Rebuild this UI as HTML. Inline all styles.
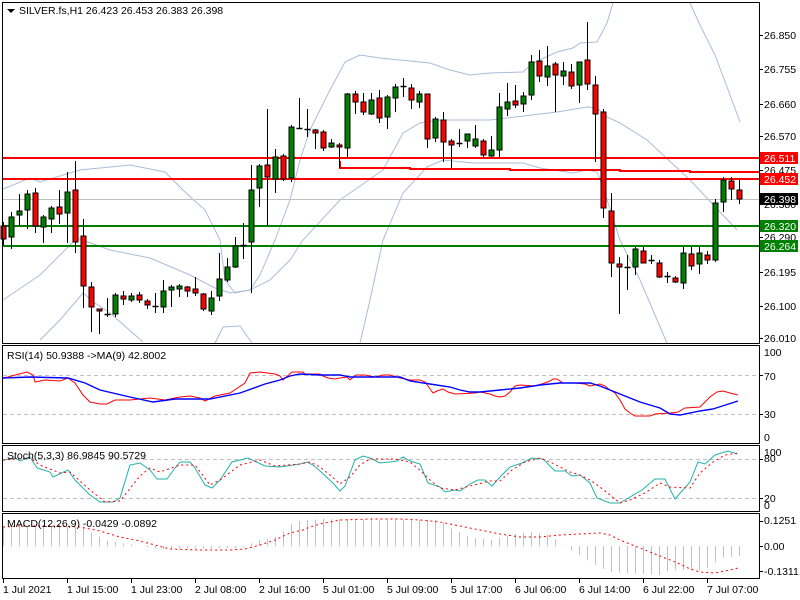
<!DOCTYPE html>
<html><head><meta charset="utf-8"><style>
html,body{margin:0;padding:0;background:#fff;}
svg{display:block;}
text{font-family:"Liberation Sans",sans-serif;font-size:10.5px;fill:#000;}
</style></head><body>
<svg id="s" width="800" height="600" viewBox="0 0 800 600" xmlns="http://www.w3.org/2000/svg">
<rect width="800" height="600" fill="#fff"/>
<g id="bands" fill="none" stroke="#A9BDDA" stroke-width="1"></g>
<g id="hl"></g>
<g id="cd"></g>
<g id="ind"></g>
<g fill="none" stroke="#000" stroke-width="1" shape-rendering="crispEdges">
<rect x="2.5" y="2.5" width="757" height="341"/>
<rect x="2.5" y="345.5" width="757" height="98"/>
<rect x="2.5" y="445.5" width="757" height="66"/>
<rect x="2.5" y="513.5" width="757" height="65"/>
</g>
<g id="ticks" stroke="#000" shape-rendering="crispEdges"></g>
<!-- labels -->
<polygon points="7,9 15,9 11,13" fill="#000"/>
<text x="19" y="14">SILVER.fs,H1  26.423 26.453 26.383 26.398</text>
<text x="7" y="359">RSI(14) 50.9388  -&gt;MA(9) 42.8002</text>
<text x="7" y="459">Stoch(5,3,3) 86.9845 90.5729</text>
<text x="7" y="527">MACD(12,26,9) -0.0429 -0.0892</text>
<g>
<text x="764" y="39">26.850</text>
<text x="764" y="73">26.755</text>
<text x="764" y="108">26.660</text>
<text x="764" y="140">26.570</text>
<text x="764" y="174">26.475</text>
<text x="764" y="208">26.380</text>
<text x="764" y="241">26.290</text>
<text x="764" y="276">26.195</text>
<text x="764" y="310">26.100</text>
<text x="764" y="342">26.010</text>
<rect x="760" y="152" width="38" height="12" fill="#f00"/><text x="764" y="162" style="fill:#fff">26.511</text>
<rect x="760" y="173" width="38" height="12" fill="#f00"/><text x="764" y="183" style="fill:#fff">26.452</text>
<rect x="760" y="193" width="38" height="12" fill="#000"/><text x="764" y="203" style="fill:#fff">26.398</text>
<rect x="760" y="220" width="38" height="12" fill="#008000"/><text x="764" y="230" style="fill:#fff">26.320</text>
<rect x="760" y="240" width="38" height="12" fill="#008000"/><text x="764" y="250" style="fill:#fff">26.264</text>
<text x="764" y="356">100</text>
<text x="764" y="380">70</text>
<text x="764" y="418">30</text>
<text x="764" y="441">0</text>
<text x="764" y="456">100</text>
<text x="764" y="462">80</text>
<text x="764" y="502">20</text>
<text x="764" y="509">0</text>
<text x="764" y="524">0.1251</text>
<text x="764" y="550">0.00</text>
<text x="764" y="575">-0.1311</text>
<text x="3" y="593">1 Jul 2021</text>
<text x="67" y="593">1 Jul 15:00</text>
<text x="131" y="593">1 Jul 23:00</text>
<text x="195" y="593">2 Jul 08:00</text>
<text x="259" y="593">2 Jul 16:00</text>
<text x="323" y="593">5 Jul 01:00</text>
<text x="387" y="593">5 Jul 09:00</text>
<text x="451" y="593">5 Jul 17:00</text>
<text x="515" y="593">6 Jul 06:00</text>
<text x="579" y="593">6 Jul 14:00</text>
<text x="643" y="593">6 Jul 22:00</text>
<text x="707" y="593">7 Jul 07:00</text>
</g>
</svg>
<script>
var NS="http://www.w3.org/2000/svg";
function el(p,t,a){var e=document.createElementNS(NS,t);for(var k in a)e.setAttribute(k,a[k]);document.getElementById(p).appendChild(e);return e;}
function pl(p,pts,a){a.points=pts.map(function(q){return q[0]+","+q[1]}).join(" ");a.fill="none";el(p,"polyline",a);}
// bands
pl("bands",[[3,189],[30,178],[40,182],[80,170],[130,165],[165,172],[185,192],[205,210],[220,240],[225,280],[235,293],[250,290],[260,275],[275,240],[290,200],[300,160],[310,130],[330,90],[345,62],[360,55],[380,58],[400,60],[430,63],[450,70],[470,75],[490,73],[523,72],[533,63],[557,52],[573,48],[580,43],[597,42],[607,23],[613,3]],{});
pl("bands",[[690,3],[700,25],[715,55],[730,95],[740,122]],{});
pl("bands",[[3,300],[40,275],[77,238],[110,250],[150,258],[190,275],[215,288],[230,293],[250,290],[270,280],[290,260],[303,240],[340,200],[383,170],[403,133],[420,123],[440,120],[490,120],[557,112],[587,107],[597,108],[607,117],[620,123],[647,140],[690,180],[737,230]],{});
pl("bands",[[40,340],[60,320],[83,293],[95,303],[110,313],[143,342]],{});
pl("bands",[[215,343],[223,327],[240,326],[252,343]],{});
pl("bands",[[360,343],[370,300],[383,240],[403,193],[427,167],[443,160],[473,163],[523,163],[540,168],[573,173],[587,170],[597,172],[603,187],[620,240],[640,280],[667,343]],{});
// horizontal lines
el("hl","line",{x1:3,y1:199.5,x2:759,y2:199.5,stroke:"#C0C0C0","shape-rendering":"crispEdges"});
pl("hl",[[340,161],[340,168],[410,168],[410,169],[510,169],[510,170],[620,170],[620,171],[690,171],[690,172],[759,172]],{stroke:"#f00","stroke-width":2});
[[158,"#f00"],[179,"#f00"],[226,"#008000"],[246,"#008000"]].forEach(function(h){el("hl","line",{x1:3,y1:h[0],x2:759,y2:h[0],stroke:h[1],"stroke-width":2});});
// candles [t,b,h,l,color]
var C=[[226,239,222,245,"r"],[217,237,212,249,"g"],[211,215,194,226,"g"],[194,210,190,229,"g"],[193,226,188,233,"r"],[217,227,215,243,"g"],[208,219,206,233,"g"],[207,214,190,224,"r"],[192,213,172,243,"g"],[190,242,161,253,"r"],
[236,286,219,308,"r"],[287,307,282,332,"r"],[309,311,309,334,"r"],[314,314,298,317,"d"],[295,314,293,317,"g"],[296,299,291,305,"r"],[296,300,293,302,"g"],[295,300,292,303,"r"],[301,305,299,309,"r"],[306,306,293,313,"d"],
[291,307,280,313,"g"],[287,290,285,307,"g"],[286,289,284,297,"g"],[287,291,286,297,"r"],[289,293,277,296,"r"],[294,309,293,311,"r"],[298,311,291,315,"g"],[279,296,253,301,"g"],[267,280,258,282,"g"],[246,267,237,268,"g"],
[245,245,223,259,"d"],[190,242,165,293,"g"],[166,188,164,207,"g"],[165,177,109,226,"r"],[157,179,149,193,"g"],[156,179,154,181,"r"],[127,178,125,182,"g"],[128,128,98,129,"d"],[129,129,109,137,"d"],[130,133,129,149,"r"],
[132,148,130,151,"r"],[143,147,139,148,"g"],[145,147,143,168,"r"],[94,148,93,157,"g"],[94,102,91,114,"r"],[102,112,93,115,"r"],[100,114,93,115,"g"],[98,118,90,123,"r"],[97,117,95,129,"g"],[87,98,84,112,"g"],
[86,86,78,97,"d"],[88,100,84,109,"r"],[94,102,91,108,"g"],[94,139,94,148,"r"],[119,138,117,142,"g"],[120,142,112,162,"r"],[141,145,139,168,"r"],[143,143,129,147,"d"],[134,141,134,148,"g"],[139,146,125,148,"g"],
[141,155,139,157,"r"],[150,156,136,157,"g"],[107,150,93,157,"g"],[102,109,83,116,"g"],[101,105,85,108,"r"],[96,104,92,112,"g"],[62,95,55,100,"g"],[61,76,50,82,"r"],[66,77,46,86,"g"],[64,75,62,112,"r"],
[71,76,62,85,"g"],[72,86,64,89,"r"],[62,85,62,103,"g"],[60,84,22,90,"r"],[85,114,76,162,"r"],[112,208,109,218,"r"],[211,263,193,277,"r"],[264,267,257,314,"r"],[267,267,255,290,"d"],[249,267,247,275,"g"],
[251,263,247,263,"r"],[260,260,255,264,"d"],[263,277,260,278,"r"],[276,276,272,283,"d"],[278,282,276,283,"r"],[253,283,247,289,"g"],[254,266,247,270,"r"],[253,264,247,274,"g"],[255,260,251,264,"r"],[203,260,199,262,"g"],
[180,202,177,212,"g"],[181,189,177,200,"r"],[190,199,179,204,"r"]];
C.forEach(function(c,k){var x=3.5+8*k;
 el("cd","line",{x1:x,y1:c[2],x2:x,y2:c[3],stroke:"#000","stroke-width":1});
 if(c[4]=="d"){el("cd","line",{x1:x-3,y1:c[0]+0.5,x2:x+3,y2:c[0]+0.5,stroke:"#000","stroke-width":1.5});}
 else{var h=Math.max(c[1]-c[0],2);el("cd","rect",{x:x-2.5,y:c[0],width:5,height:h,fill:c[4]=="g"?"#008000":"#f00",stroke:"#000","stroke-width":1});}
});
// indicator dashed levels
[375,414,459,498].forEach(function(y){el("ind","line",{x1:3,y1:y+0.5,x2:759,y2:y+0.5,stroke:"#C0C0C0","stroke-dasharray":"4,3","shape-rendering":"crispEdges"});});
// RSI
pl("ind",[[3,378],[8,377],[15,375],[27,372],[33,375],[35,382],[45,380],[60,381],[68,378],[75,383],[83,395],[90,402],[100,404],[107,404],[115,400],[130,400],[150,398],[165,400],[180,397],[190,396],[200,398],[205,401],[215,396],[230,393],[245,383],[250,373],[260,372],[275,374],[280,376],[283,380],[292,372],[303,372],[305,374],[320,374],[323,376],[328,378],[335,379],[340,378],[347,377],[350,380],[356,375],[365,375],[375,377],[383,375],[390,375],[400,378],[410,380],[420,380],[425,382],[428,386],[433,393],[437,391],[443,389],[448,392],[455,394],[475,393],[480,392],[490,394],[495,396],[500,397],[505,396],[510,392],[515,386],[520,385],[535,386],[545,383],[550,381],[553,379],[557,379],[563,383],[575,383],[585,384],[590,386],[600,384],[605,386],[610,390],[615,393],[620,400],[625,409],[630,413],[635,416],[650,416],[655,414],[670,413],[678,412],[685,408],[700,407],[710,397],[717,392],[723,391],[730,393],[738,395]],{stroke:"#f00"});
pl("ind",[[3,378],[30,377],[68,378],[85,383],[100,390],[130,397],[153,402],[175,399],[210,399],[240,393],[265,384],[280,380],[290,376],[300,374],[320,375],[340,375],[350,377],[400,377],[410,381],[430,384],[450,387],[460,390],[470,392],[480,392],[500,390],[520,388],[540,385],[560,383],[590,383],[600,386],[610,390],[620,394],[630,398],[640,402],[650,405],[660,408],[670,414],[680,415],[700,411],[713,409],[738,401]],{stroke:"#00f","stroke-width":1.4});
// Stoch
pl("ind",[[3,460],[15,458],[20,461],[30,457],[37,468],[50,472],[53,477],[68,470],[75,480],[90,495],[100,502],[113,502],[120,498],[130,465],[140,463],[150,470],[157,479],[167,479],[175,468],[180,462],[190,462],[195,468],[205,485],[212,488],[220,480],[232,462],[248,458],[265,466],[280,467],[300,464],[307,462],[313,465],[320,471],[333,483],[340,491],[345,486],[355,460],[363,456],[370,458],[380,463],[390,462],[397,461],[403,457],[410,461],[420,464],[428,483],[440,487],[445,492],[455,490],[460,491],[470,484],[478,480],[485,480],[492,486],[500,477],[510,467],[522,463],[532,458],[543,459],[555,471],[565,471],[572,476],[580,475],[590,483],[597,498],[610,503],[620,503],[630,497],[642,490],[655,479],[665,479],[675,499],[690,482],[698,462],[705,464],[715,455],[728,451],[737,454]],{stroke:"#20B2AA"});
pl("ind",[[3,460],[30,458],[40,465],[60,473],[70,472],[90,490],[105,502],[120,501],[140,476],[150,468],[160,472],[180,465],[195,465],[210,485],[220,480],[240,465],[260,460],[275,466],[300,464],[310,462],[320,467],[330,475],[340,484],[350,477],[360,465],[370,459],[395,459],[410,462],[420,470],[430,480],[440,488],[455,490],[470,486],[490,481],[500,481],[512,470],[525,462],[540,458],[550,462],[560,467],[570,472],[580,475],[590,480],[600,487],[610,495],[620,503],[630,500],[645,493],[660,483],[670,487],[690,488],[700,473],[713,462],[725,455],[738,453]],{stroke:"#f00","stroke-dasharray":"2,3"});
// MACD histogram
function mh(x){var P=[[3,527],[85,527],[92,533],[100,537],[108,541],[140,546],[160,549],[240,548],[260,540],[275,537],[283,532],[290,525],[300,521],[320,519],[440,520],[450,528],[470,537],[490,540],[510,535],[530,532],[550,535],[560,543],[570,550],[580,555],[590,562],[600,567],[610,572],[660,575],[670,570],[700,570],[710,567],[720,558],[738,556]];
for(var i=1;i<P.length;i++){if(x<=P[i][0]){var a=P[i-1],b=P[i];return a[1]+(b[1]-a[1])*(x-a[0])/(b[0]-a[0]);}}return 556;}
for(var k=0;k<93;k++){var x=Math.round(3+8*k)+0.5;el("ind","line",{x1:x,y1:546,x2:x,y2:mh(x),stroke:"#C0C0C0"});}
pl("ind",[[3,527],[20,526],[60,526],[80,527],[100,531],[120,537],[140,541],[155,545],[170,549],[200,550],[230,550],[245,549],[260,545],[275,540],[290,533],[303,530],[310,527],[320,524],[340,520],[370,519],[400,519],[420,520],[440,522],[460,526],[480,530],[500,534],[520,537],[540,537],[560,535],[580,534],[600,533],[610,535],[620,540],[640,548],[660,556],[680,564],[690,569],[700,572],[715,573],[730,570],[738,568]],{stroke:"#f00","stroke-dasharray":"2,3"});
// ticks
[35,69,104,136,170,204,237,272,306,338].forEach(function(y){el("ticks","line",{x1:759,y1:y+0.5,x2:763,y2:y+0.5});});
[375,414,459,498,521,546,571].forEach(function(y){el("ticks","line",{x1:759,y1:y+0.5,x2:763,y2:y+0.5});});
[3,67,131,195,259,323,387,451,515,579,643,707].forEach(function(x){el("ticks","line",{x1:x+0.5,y1:579,x2:x+0.5,y2:583});});
</script>
</body></html>
